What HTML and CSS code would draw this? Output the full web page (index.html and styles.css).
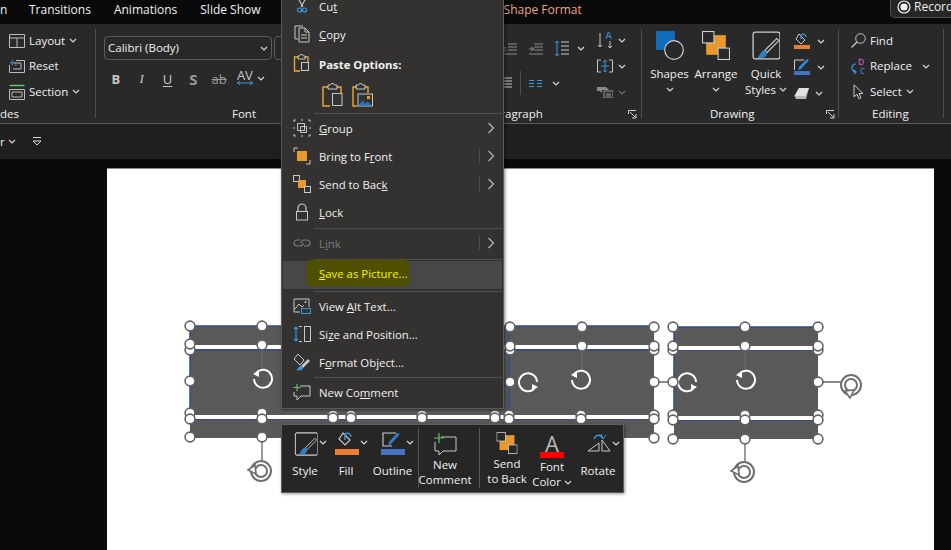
FILE: index.html
```html
<!DOCTYPE html>
<html lang="en">
  <head>
    <meta charset="UTF-8" />
    <title>Shape Format - Save as Picture</title>
    <link rel="stylesheet" href="styles.css">
  </head>
  <body>
    <svg class="defs" width="0" height="0">
      <symbol id="chev" viewBox="0 0 8 5"><path d="M1 1l3 3 3-3" fill="none" stroke="#d8d8d8" stroke-width="1.2"/></symbol>
      <symbol id="gt" viewBox="0 0 8 12"><path d="M1.5 1l5 5-5 5" fill="none" stroke="#b8b8b8" stroke-width="1.2"/></symbol>
      <symbol id="launch" viewBox="0 0 9 9"><path d="M.5 4V.5H8M2 2l5.5 5.5M8 4v4H4" fill="none" stroke="#d0d0d0"/></symbol>
      <symbol id="brush" viewBox="0 0 26 27"><rect x="1" y="1" width="25" height="25" rx="2" fill="none" stroke="#cfcfcf" stroke-width="1.2"/><path d="M25 9L14 20l-2-2L23 7z" fill="#292929" stroke="#cfcfcf"/><path d="M12 18c-4 0-4 4-7 7 4 1 9 0 9-5z" fill="#2f7fc9"/></symbol>
      <symbol id="bucket" viewBox="0 0 20 16"><path d="M7 1l7 7-5 5-6-6z" fill="none" stroke="#cfcfcf" stroke-width="1.1"/><path d="M9 8V2c3-2 6 0 6 3" fill="none" stroke="#3a96dd" stroke-width="1.5"/></symbol>
      <symbol id="pen" viewBox="0 0 20 16"><path d="M14 1H1v13h9" fill="none" stroke="#cfcfcf" stroke-width="1.1"/><path d="M18 2l-9 10-3 2 1-4 8-9z" fill="#2f7fc9"/></symbol>
      <symbol id="stack" viewBox="0 0 27 28"><rect x="4" y="4" width="19" height="19" fill="#e8982c"/><rect x=".5" y=".5" width="11" height="11" fill="#292929" stroke="#d0d0d0"/><rect x="15.5" y="16.5" width="11" height="11" fill="#292929" stroke="#d0d0d0"/></symbol>
      <symbol id="rotw" viewBox="0 0 24 24"><path d="M7 6a9 9 0 1 1-3 7" fill="none" stroke="#fff" stroke-width="2"/><path d="M3 8l6-4v7z" fill="#fff"/></symbol>
      <symbol id="rotr" viewBox="0 0 24 24"><path d="M17 18a9 9 0 1 1 3-7" fill="none" stroke="#fff" stroke-width="2"/><path d="M21 16l-6 4v-7z" fill="#fff"/></symbol>
      <symbol id="rotg" viewBox="0 0 28 28"><circle cx="15" cy="14" r="10" fill="#fff" stroke="#6e6e6e" stroke-width="2"/><circle cx="15" cy="14" r="6" fill="none" stroke="#6e6e6e" stroke-width="2"/><path d="M2 13l7-5 1 9z" fill="#fff" stroke="#6e6e6e" stroke-width="1.6"/></symbol>
      <symbol id="h" viewBox="0 0 12 12"><circle cx="6" cy="6" r="4.9" fill="#fff" stroke="#626262" stroke-width="1.6"/></symbol>
    </svg>

    <div class="tabs">
      <span class="tab-cut">n</span>
      <span class="tab">Transitions</span>
      <span class="tab">Animations</span>
      <span class="tab">Slide Show</span>
      <span class="tab tab-shape">Shape Format</span>
      <div class="record">
        <svg width="14" height="14" viewBox="0 0 14 14"><circle cx="7" cy="7" r="6" fill="none" stroke="#f2f2f2" stroke-width="1.2"/><circle cx="7" cy="7" r="3.6" fill="#f2f2f2"/></svg>
        <span>Record</span>
      </div>
    </div>

    <div class="ribbon">
      <div class="group g-slides">
        <div class="rows">
          <div class="row">
            <svg width="16" height="14" viewBox="0 0 16 14"><path d="M.5.5h15v13H.5zM.5 4h15M8 4v9.5" fill="none" stroke="#bdbdbd"/></svg>
            <span>Layout</span><svg class="chev" width="8" height="5"><use href="#chev"/></svg>
          </div>
          <div class="row">
            <svg width="16" height="14" viewBox="0 0 16 14"><path d="M7 1.5h8.500v12H.5V6M4 4h8v6H4" fill="none" stroke="#bdbdbd"/><path d="M2 4c3-1 5 0 5 3M4 1L1.500 4 4 6" fill="none" stroke="#3a96dd"/></svg>
            <span>Reset</span>
          </div>
          <div class="row">
            <svg width="16" height="16" viewBox="0 0 16 16"><path d="M.5 1.500h15" stroke="#5fc56a" stroke-width="1.500"/><path d="M.5 5.500h15v10H.5zM3 8h10v5H3z" fill="none" stroke="#bdbdbd"/></svg>
            <span>Section</span><svg class="chev" width="8" height="5"><use href="#chev"/></svg>
          </div>
        </div>
        <div class="glabel glabel-left">des</div>
      </div>

      <div class="group g-font">
        <div class="font-top">
          <div class="select"><span>Calibri (Body)</span><svg class="chev" width="8" height="5"><use href="#chev"/></svg></div>
          <div class="select select-size"></div>
        </div>
        <div class="font-bottom">
          <b class="fb">B</b>
          <i class="fi">I</i>
          <u class="fu">U</u>
          <b class="fs">S</b>
          <s class="fab">ab</s>
          <span class="fav">AV<svg width="16" height="4" viewBox="0 0 16 4"><path d="M0 2h16M3 .2L.5 2 3 3.800M13 .2L15.500 2 13 3.800" fill="none" stroke="#3a96dd"/></svg></span>
          <svg class="chev" width="8" height="5"><use href="#chev"/></svg>
        </div>
        <div class="glabel glabel-font">Font</div>
      </div>

      <div class="group g-para">
        <div class="para-body">
          <div class="para-left">
            <div class="para-row">
              <svg width="15" height="12" viewBox="0 0 15 12"><path d="M6 1h9M6 4h9M6 7h9M1 11h14M4 4L1 6l3 2" fill="none" stroke="#8a8a8a"/></svg>
              <svg width="15" height="12" viewBox="0 0 15 12"><path d="M6 1h9M6 4h9M6 7h9M1 11h14M1 6h4M3 4l3 2-3 2" fill="none" stroke="#8a8a8a"/></svg>
              <svg width="15" height="17" viewBox="0 0 15 17"><path d="M3 1v15M1 3l2-2 2 2M1 14l2 2 2-2" fill="none" stroke="#3a96dd"/><path d="M7 2h8M7 6h8M7 10h8M7 14h8" stroke="#c8c8c8"/></svg>
              <svg class="chev" width="8" height="5"><use href="#chev"/></svg>
            </div>
            <div class="para-row para-row2">
              <svg width="10" height="12" viewBox="0 0 10 12"><path d="M0 1h10M0 4h10M0 7h10M0 10h10" stroke="#c8c8c8"/></svg>
              <i class="vsep"></i>
              <svg width="13" height="7" viewBox="0 0 13 7"><path d="M0 .5h5M8 .5h5M0 3.500h5M8 3.500h5M0 6.500h5M8 6.500h5" stroke="#3a96dd"/></svg>
              <svg class="chev" width="8" height="5"><use href="#chev"/></svg>
            </div>
          </div>
          <div class="para-right">
            <div class="row-s">
              <svg width="16" height="17" viewBox="0 0 16 17"><path d="M3 1v14M1 13l2 2 2-2M13 9v7M11 14l2 2 2-2" fill="none" stroke="#c8c8c8"/><text x="8.500" y="7" class="ta">A</text></svg>
              <svg class="chev" width="8" height="5"><use href="#chev"/></svg>
            </div>
            <div class="row-s">
              <svg width="16" height="14" viewBox="0 0 16 14"><path d="M4 1H.5v12H4M12 1h3.500v12H12" fill="none" stroke="#c8c8c8"/><path d="M8 1v12M6 3l2-2 2 2M6 11l2 2 2-2M4 7h8" fill="none" stroke="#3a96dd"/></svg>
              <svg class="chev" width="8" height="5"><use href="#chev"/></svg>
            </div>
            <div class="row-s row-dim">
              <svg width="16" height="12" viewBox="0 0 16 12"><path d="M0 1h9l3 3H5v3L3 5H0z" fill="#8a8a8a"/><path d="M7 5h9v7H7zM9 8h5M9 10h5" fill="none" stroke="#9a9a9a"/></svg>
              <svg class="chev" width="8" height="5"><use href="#chev"/></svg>
            </div>
          </div>
        </div>
        <div class="glabel glabel-para"><span>Paragraph</span><svg width="9" height="9"><use href="#launch"/></svg></div>
      </div>

      <div class="group g-draw">
        <div class="draw-body">
          <div class="big big-shapes">
            <svg width="28" height="29" viewBox="0 0 28 29"><rect width="19" height="19" fill="#0f6cbd"/><circle cx="18" cy="19" r="9.300" fill="#292929" stroke="#cfcfcf" stroke-width="1.200"/></svg>
            <span>Shapes</span><svg class="chev" width="8" height="5"><use href="#chev"/></svg>
          </div>
          <div class="big big-arrange">
            <svg width="28" height="28"><use href="#stack"/></svg>
            <span>Arrange</span><svg class="chev" width="8" height="5"><use href="#chev"/></svg>
          </div>
          <div class="big big-quick">
            <svg width="30" height="29" viewBox="0 0 26 27"><use href="#brush"/></svg>
            <span>Quick</span><span>Styles <svg class="chev" width="8" height="5"><use href="#chev"/></svg></span>
          </div>
          <div class="draw-tools">
            <div class="row-s">
              <svg width="16" height="16" viewBox="0 0 16 16"><path d="M5 1l6 6-4 4-5-5z" fill="none" stroke="#cfcfcf"/><path d="M7 6V2c3-2 5 0 5 2" fill="none" stroke="#3a96dd" stroke-width="1.300"/><rect y="12" width="16" height="4" fill="#ed7d31"/></svg>
              <svg class="chev" width="8" height="5"><use href="#chev"/></svg>
            </div>
            <div class="row-s">
              <svg width="16" height="16" viewBox="0 0 16 16"><path d="M10 1H.5v10" fill="none" stroke="#cfcfcf"/><path d="M15 1l-8 9-3 1 1-3 8-8z" fill="#2f8be0"/><rect y="12" width="16" height="4" fill="#4472c4"/></svg>
              <svg class="chev" width="8" height="5"><use href="#chev"/></svg>
            </div>
            <div class="row-s">
              <svg width="16" height="13" viewBox="0 0 16 13"><path d="M5 1h10l-3 11H2L.5 9z" fill="#b8b8b8"/><path d="M5 1h10l-4 8H.5z" fill="#e0e0e0"/></svg>
              <svg class="chev chev-eraser" width="8" height="5"><use href="#chev"/></svg>
            </div>
          </div>
        </div>
        <div class="glabel glabel-draw"><span>Drawing</span><svg width="9" height="9"><use href="#launch"/></svg></div>
      </div>

      <div class="group g-edit">
        <div class="rows">
          <div class="row">
            <svg width="15" height="15" viewBox="0 0 15 15"><circle cx="9.500" cy="5.500" r="4.800" fill="none" stroke="#c8c8c8"/><path d="M6 9l-5.500 5.500" stroke="#c8c8c8" stroke-width="1.300"/></svg>
            <span>Find</span>
          </div>
          <div class="row">
            <svg width="15" height="17" viewBox="0 0 15 17"><text x="7" y="7" class="tb">b</text><text x="9" y="16" class="tc">c</text><path d="M5 6C2 6 1 8 1 10s2 4 4 4M3 12l2 2-2 2" fill="none" stroke="#3a96dd" stroke-width="1.200"/></svg>
            <span>Replace</span><svg class="chev chev-replace" width="8" height="5"><use href="#chev"/></svg>
          </div>
          <div class="row">
            <svg width="15" height="16" viewBox="0 0 15 16"><path d="M3 .8v12l3-2.500 2 4.500 2-1-2-4.300h4z" fill="none" stroke="#c8c8c8"/></svg>
            <span>Select</span><svg class="chev" width="8" height="5"><use href="#chev"/></svg>
          </div>
        </div>
        <div class="glabel glabel-edit">Editing</div>
      </div>
    </div>

    <div class="subbar">
      <span>r</span><svg class="chev" width="8" height="5"><use href="#chev"/></svg>
      <svg class="qat" width="10" height="9" viewBox="0 0 10 9"><path d="M1 .5h8M1 4l4 4 4-4z" fill="none" stroke="#d8d8d8"/></svg>
    </div>

    <div class="canvas">
      <div class="slide">
        <svg class="shapes" width="827" height="381" viewBox="107 169 827 381">
          <rect x="190" y="326" width="464" height="112" fill="#595959"/>
          <rect x="674" y="327" width="144" height="112" fill="#595959"/>
          <path d="M190 326h464M190 350h464M190 419h464M190 326v93M509 327v92" fill="none" stroke="#2f4a8f" stroke-width="1.500"/>
          <path d="M674 327h144M674 350h144M674 420h144M674 327v93" fill="none" stroke="#2f4a8f" stroke-width="1.500"/>
          <rect x="190" y="345" width="464" height="4" fill="#fff"/>
          <rect x="190" y="415" width="464" height="4" fill="#fff"/>
          <rect x="674" y="346" width="144" height="4" fill="#fff"/>
          <rect x="674" y="416" width="144" height="4" fill="#fff"/>
          <path d="M654 382h20M818 382h26M745 439v22M262 437v24" stroke="#666" stroke-width="1.300"/>
          <path d="M262 350v20M582 350v20M745 350v20" stroke="#6f6f6f"/>

          <use href="#rotw" x="250" y="366" width="24" height="24"/>
          <use href="#rotw" x="568" y="367" width="24" height="24"/>
          <use href="#rotw" x="733" y="367" width="24" height="24"/>
          <use href="#rotr" x="517" y="371" width="24" height="24"/>
          <use href="#rotr" x="676" y="371" width="24" height="24"/>
          <use href="#rotg" x="246" y="457" width="28" height="28"/>
          <use href="#rotg" x="729" y="458" width="28" height="28"/>
          <use href="#rotg" x="837" y="372" width="28" height="28" transform="rotate(-90 851 386)"/>

          <use href="#h" x="184" y="320" width="12" height="12"/>
          <use href="#h" x="256" y="320" width="12" height="12"/>
          <use href="#h" x="184" y="344" width="12" height="12"/>
          <use href="#h" x="184" y="338" width="12" height="12"/>
          <use href="#h" x="256" y="339" width="12" height="12"/>
          <use href="#h" x="184" y="375" width="12" height="12"/>
          <use href="#h" x="184" y="407" width="12" height="12"/>
          <use href="#h" x="184" y="413" width="12" height="12"/>
          <use href="#h" x="256" y="407" width="12" height="12"/>
          <use href="#h" x="256" y="413" width="12" height="12"/>
          <use href="#h" x="184" y="431" width="12" height="12"/>
          <use href="#h" x="256" y="431" width="12" height="12"/>

          <use href="#h" x="327" y="409" width="12" height="12"/>
          <use href="#h" x="327" y="412" width="12" height="12"/>
          <use href="#h" x="345" y="409" width="12" height="12"/>
          <use href="#h" x="345" y="412" width="12" height="12"/>
          <use href="#h" x="416" y="409" width="12" height="12"/>
          <use href="#h" x="416" y="412" width="12" height="12"/>
          <use href="#h" x="489" y="409" width="12" height="12"/>
          <use href="#h" x="489" y="412" width="12" height="12"/>

          <use href="#h" x="504" y="321" width="12" height="12"/>
          <use href="#h" x="576" y="321" width="12" height="12"/>
          <use href="#h" x="648" y="321" width="12" height="12"/>
          <use href="#h" x="504" y="344" width="12" height="12"/>
          <use href="#h" x="504" y="340" width="12" height="12"/>
          <use href="#h" x="576" y="340" width="12" height="12"/>
          <use href="#h" x="648" y="344" width="12" height="12"/>
          <use href="#h" x="648" y="340" width="12" height="12"/>
          <use href="#h" x="504" y="376" width="12" height="12"/>
          <use href="#h" x="648" y="376" width="12" height="12"/>
          <use href="#h" x="503" y="409" width="12" height="12"/>
          <use href="#h" x="503" y="413" width="12" height="12"/>
          <use href="#h" x="575" y="409" width="12" height="12"/>
          <use href="#h" x="575" y="413" width="12" height="12"/>
          <use href="#h" x="648" y="409" width="12" height="12"/>
          <use href="#h" x="648" y="413" width="12" height="12"/>
          <use href="#h" x="648" y="432" width="12" height="12"/>

          <use href="#h" x="667" y="321" width="12" height="12"/>
          <use href="#h" x="739" y="321" width="12" height="12"/>
          <use href="#h" x="812" y="321" width="12" height="12"/>
          <use href="#h" x="667" y="344" width="12" height="12"/>
          <use href="#h" x="667" y="340" width="12" height="12"/>
          <use href="#h" x="739" y="340" width="12" height="12"/>
          <use href="#h" x="812" y="344" width="12" height="12"/>
          <use href="#h" x="812" y="340" width="12" height="12"/>
          <use href="#h" x="667" y="376" width="12" height="12"/>
          <use href="#h" x="812" y="376" width="12" height="12"/>
          <use href="#h" x="667" y="409" width="12" height="12"/>
          <use href="#h" x="667" y="414" width="12" height="12"/>
          <use href="#h" x="739" y="409" width="12" height="12"/>
          <use href="#h" x="739" y="414" width="12" height="12"/>
          <use href="#h" x="812" y="409" width="12" height="12"/>
          <use href="#h" x="812" y="414" width="12" height="12"/>
          <use href="#h" x="667" y="433" width="12" height="12"/>
          <use href="#h" x="739" y="433" width="12" height="12"/>
          <use href="#h" x="812" y="433" width="12" height="12"/>
        </svg>
      </div>
    </div>

    <div class="menu">
      <div class="mi">
        <svg width="18" height="18" viewBox="0 0 18 18"><path d="M5 1l5 9M13 1L8 10" stroke="#c8c8c8" stroke-width="1.100"/><circle cx="6.500" cy="13" r="2" fill="none" stroke="#3a96dd" stroke-width="1.200"/><circle cx="11.500" cy="13" r="2" fill="none" stroke="#3a96dd" stroke-width="1.200"/></svg>
        <span>Cu<u>t</u></span>
      </div>
      <div class="mi">
        <svg width="18" height="18" viewBox="0 0 18 18"><path d="M10 1H2v13h3M6 3h6l4 4v10H6zM12 3v4h4M8 10h6M8 13h6" fill="none" stroke="#c8c8c8"/></svg>
        <span><u>C</u>opy</span>
      </div>
      <div class="mi mi-paste">
        <svg width="18" height="18" viewBox="0 0 18 18"><path d="M5 3H1.500v14H7" fill="none" stroke="#f0a830" stroke-width="1.300"/><path d="M12 3h3v5" fill="none" stroke="#f0a830" stroke-width="1.300"/><path d="M5 5V2h1.500l1-1.500h2l1 1.500H12v3z" fill="none" stroke="#c8c8c8"/><rect x="8.500" y="8.500" width="7" height="8" fill="#333" stroke="#c8c8c8"/></svg>
        <b>Paste Options:</b>
      </div>
      <div class="paste-row">
        <svg width="21" height="24" viewBox="0 0 21 24"><path d="M6 4H1v19h7" fill="none" stroke="#f0a830" stroke-width="1.400"/><path d="M15 4h4v6" fill="none" stroke="#f0a830" stroke-width="1.400"/><path d="M6 6V2h2.500l1-1.500h2l1 1.500H15v4z" fill="none" stroke="#c8c8c8"/><rect x="10.500" y="10.500" width="9.500" height="12" fill="#333" stroke="#c8c8c8"/></svg>
        <svg width="21" height="24" viewBox="0 0 21 24"><path d="M5 4H1v19h4" fill="none" stroke="#f0a830" stroke-width="1.400"/><path d="M13 4h3v6" fill="none" stroke="#f0a830" stroke-width="1.400"/><path d="M4 6V2h2.500l1-1.500h2l1 1.500H13v4z" fill="none" stroke="#c8c8c8"/><rect x="6" y="11" width="14.500" height="12" fill="#333" stroke="#c8c8c8"/><path d="M6.500 22.500l4-5 3 3 2-2 4.500 4z" fill="#1a75c9"/><rect x="15" y="13" width="3" height="3" fill="#e8982c"/></svg>
      </div>
      <div class="sep sep-tight"></div>
      <div class="mi">
        <svg width="18" height="18" viewBox="0 0 18 18"><path d="M1 3V1h2M8 1h2M15 1h2v2M1 8v2M1 15v2h2M8 17h2M15 17h2v-2M17 8v2" stroke="#c8c8c8" fill="none"/><path d="M4.500 4.500h7v7h-7zM7.500 7.500h6v6h-6z" fill="none" stroke="#c8c8c8"/></svg>
        <span><u>G</u>roup</span><svg class="gt" width="8" height="12"><use href="#gt"/></svg>
      </div>
      <div class="mi">
        <svg width="18" height="18" viewBox="0 0 18 18"><path d="M1 5V1h4M13 17h4v-4" fill="none" stroke="#c8c8c8"/><rect x="4" y="4" width="10" height="10" fill="#e8982c"/></svg>
        <span>Bring to F<u>r</u>ont</span><i class="bar"></i><svg class="gt gt-bar" width="8" height="12"><use href="#gt"/></svg>
      </div>
      <div class="mi">
        <svg width="18" height="18" viewBox="0 0 18 18"><rect x=".5" y=".5" width="6" height="6" fill="none" stroke="#c8c8c8"/><rect x="5" y="5" width="8" height="8" fill="#e8982c"/><rect x="11.500" y="11.500" width="6" height="6" fill="#333" stroke="#c8c8c8"/></svg>
        <span>Send to Bac<u>k</u></span><i class="bar"></i><svg class="gt gt-bar" width="8" height="12"><use href="#gt"/></svg>
      </div>
      <div class="mi">
        <svg width="18" height="18" viewBox="0 0 18 18"><path d="M5 8V5a4 4 0 0 1 8 0v3" fill="none" stroke="#c8c8c8" stroke-width="1.200"/><rect x="3.500" y="8.500" width="11" height="8.500" fill="none" stroke="#c8c8c8"/></svg>
        <span><u>L</u>ock</span>
      </div>
      <div class="sep"></div>
      <div class="mi mi-off">
        <svg width="18" height="18" viewBox="0 0 18 18"><path d="M7 6H4a3 3 0 0 0 0 6h3a3 3 0 0 0 3-3M11 12h3a3 3 0 0 0 0-6h-3a3 3 0 0 0-3 3" fill="none" stroke="#7a7a7a" stroke-width="1.200"/></svg>
        <span>L<u>i</u>nk</span><i class="bar"></i><svg class="gt gt-bar" width="8" height="12"><use href="#gt"/></svg>
      </div>
      <div class="sep"></div>
      <div class="mi mi-save">
        <i class="noicon"></i>
        <span class="hl"><u>S</u>ave as Picture...</span>
      </div>
      <div class="sep"></div>
      <div class="mi">
        <svg width="18" height="18" viewBox="0 0 18 18"><path d="M16 10V2H1v13h6" fill="none" stroke="#c8c8c8"/><path d="M2 12l4-5 3 3 2-2" fill="none" stroke="#c8c8c8"/><circle cx="12.500" cy="5" r="1" fill="#c8c8c8"/><rect x="8.500" y="11.500" width="9" height="5" fill="#333" stroke="#3a96dd"/></svg>
        <span>View <u>A</u>lt Text...</span>
      </div>
      <div class="mi">
        <svg width="18" height="18" viewBox="0 0 18 18"><path d="M3 2v14M1 4l2-2 2 2M1 14l2 2 2-2" fill="none" stroke="#3a96dd" stroke-width="1.200"/><rect x="11.500" y="1.500" width="6" height="15" fill="none" stroke="#c8c8c8"/><path d="M6 1.500h3M6 16.500h3" stroke="#c8c8c8"/></svg>
        <span>Si<u>z</u>e and Position...</span>
      </div>
      <div class="mi">
        <svg width="18" height="18" viewBox="0 0 18 18"><path d="M5 1l6 6-4 5-6-6z" fill="none" stroke="#c8c8c8"/><path d="M17 8l-7 7-2-2 7-7z" fill="#c8c8c8"/><path d="M8 13c-3 0-2 3-5 4 4 1 7 0 7-2z" fill="#3a96dd"/></svg>
        <span>F<u>o</u>rmat Object...</span>
      </div>
      <div class="sep sep-tight"></div>
      <div class="mi">
        <svg width="18" height="18" viewBox="0 0 18 18"><path d="M7 3h10v10H8l-4 4v-4H1V9" fill="none" stroke="#c8c8c8"/><path d="M4 1v7M.5 4.500h7" stroke="#5fc56a" stroke-width="1.200"/></svg>
        <span>New Co<u>m</u>ment</span>
      </div>
    </div>

    <div class="mini">
      <div class="mb mb-style">
        <div class="mb-ic"><svg width="24" height="24" viewBox="0 0 26 27"><use href="#brush"/></svg><svg class="chev" width="8" height="5"><use href="#chev"/></svg></div>
        <span>Style</span>
      </div>
      <div class="mb mb-fill">
        <div class="mb-ic"><span class="swatch"><svg width="22" height="16" viewBox="0 0 20 16"><use href="#bucket"/></svg><i class="sw-orange"></i></span><svg class="chev" width="8" height="5"><use href="#chev"/></svg></div>
        <span>Fill</span>
      </div>
      <div class="mb mb-outline">
        <div class="mb-ic"><span class="swatch"><svg width="22" height="16" viewBox="0 0 20 16"><use href="#pen"/></svg><i class="sw-blue"></i></span><svg class="chev" width="8" height="5"><use href="#chev"/></svg></div>
        <span>Outline</span>
      </div>
      <i class="mini-sep"></i>
      <div class="mb mb-comment">
        <svg width="24" height="22" viewBox="0 0 24 22"><path d="M8 4h15v14H10l-4 4v-4H2v-9" fill="none" stroke="#c8c8c8"/><path d="M6 0v10M1 5h10" stroke="#5fc56a" stroke-width="1.200"/></svg>
        <span>New</span><span>Comment</span>
      </div>
      <i class="mini-sep"></i>
      <div class="mb mb-back">
        <svg width="22" height="22" viewBox="0 0 27 28"><use href="#stack"/></svg>
        <span>Send</span><span>to Back</span>
      </div>
      <div class="mb mb-color">
        <span class="swatch"><span class="letter">A</span><i class="sw-red"></i></span>
        <span>Font</span><span class="nowrap">Color <svg class="chev" width="8" height="5"><use href="#chev"/></svg></span>
      </div>
      <div class="mb mb-rotate">
        <div class="mb-ic"><svg width="24" height="19" viewBox="0 0 24 19"><path d="M1 18l11-8v8zM15 7v11h8z" fill="none" stroke="#c8c8c8"/><path d="M16 6C14 1 9 1 7 6" fill="none" stroke="#3a96dd" stroke-width="1.300"/><path d="M14 1l2 5 3-4" fill="none" stroke="#3a96dd"/></svg><svg class="chev" width="8" height="5"><use href="#chev"/></svg></div>
        <span>Rotate</span>
      </div>
    </div>
  </body>
</html>
```

FILE: styles.css
```css
*{
    margin: 0;
    padding: 0;
    box-sizing: border-box;
}
body{
    width: 951px;
    height: 550px;
    overflow: hidden;
    position: relative;
    background: #0a0a0a;
    color: #f0f0f0;
    font-family: "Open Sans", sans-serif;
    font-size: 11.500px;
    line-height: 16px;
}
svg{
    flex-shrink: 0;
    display: block;
}
.defs{
    position: absolute;
}
i{
    display: block;
}
.chev{
    display: inline-block;
}
.nowrap{
    white-space: nowrap;
}

/* tab strip */
.tabs{
    height: 24px;
    display: flex;
    align-items: center;
    background: #0a0a0a;
    font-size: 12px;
    padding-bottom: 5px;
    overflow: hidden;
}
.tab-cut{
    width: 29px;
}
.tab{
    margin-right: 23px;
}
.tab-shape{
    margin-left: 220px;
    margin-right: 0;
    color: #e8a48c;
}
.record{
    margin-left: auto;
    margin-right: -20px;
    margin-top: -5px;
    width: 81px;
    height: 21px;
    flex-shrink: 0;
    display: flex;
    align-items: center;
    gap: 3px;
    padding-left: 6px;
    background: #262626;
    border: 1px solid #4f4f4f;
    border-top: 0;
    border-radius: 0 0 0 5px;
}

/* ribbon */
.ribbon{
    height: 100px;
    display: flex;
    padding-top: 5px;
    background: #292929;
    border-bottom: 1px solid #5a5a5a;
}
.group{
    height: 89px;
    position: relative;
    border-right: 1px solid #4f4f4f;
    flex-shrink: 0;
}
.g-slides{
    width: 96px;
}
.g-font{
    width: 364px;
}
.g-para{
    width: 182px;
}
.g-draw{
    width: 197px;
}
.g-edit{
    width: 105px;
}
.rows{
    display: flex;
    flex-direction: column;
    margin-top: -1px;
}
.row{
    height: 25.500px;
    display: flex;
    align-items: center;
    gap: 4px;
}
.g-slides .rows{
    padding-left: 9px;
}
.g-edit .rows{
    padding-left: 12px;
}
.chev-replace{
    margin-left: 6px;
}
.glabel{
    position: absolute;
    bottom: -4px;
    line-height: 16px;
    display: flex;
    align-items: center;
}
.glabel-left{
    left: 0;
}
.glabel-font{
    left: 136px;
}
.glabel-para{
    left: 0;
    right: 4px;
    justify-content: space-between;
    padding-left: 27px;
}
.glabel-draw{
    left: 0;
    right: 3px;
    justify-content: space-between;
    padding-left: 68px;
}
.glabel-edit{
    left: 33px;
}

.font-top{
    display: flex;
    gap: 2px;
    padding: 7px 0 0 8px;
}
.select{
    width: 168px;
    height: 24px;
    display: flex;
    align-items: center;
    justify-content: space-between;
    padding: 0 3px;
    border: 1px solid #5c5c5c;
    border-radius: 4px;
    background: #292929;
}
.select-size{
    width: 40px;
}
.font-bottom{
    display: flex;
    align-items: center;
    padding: 6px 0 0 7px;
    color: #c8c8c8;
    height: 31px;
    font-size: 13px;
}
.fb,
.fi,
.fu,
.fs,
.fab,
.fav{
    width: 25.800px;
    text-align: center;
}
.fi{
    font-family: "Liberation Serif", serif;
}
.fu{
    text-underline-offset: 2px;
}
.fs{
    font-size: 15px;
    color: #9a9a9a;
}
.fab{
    color: #9a9a9a;
}
.fav{
    display: block;
    line-height: 12px;
    margin-top: -3px;
    color: #c8c8c8;
}
.fav svg{
    margin: 0 auto;
}
.font-bottom .chev{
    margin-left: -1px;
}

.para-body{
    display: flex;
    justify-content: flex-end;
    margin-top: -2px;
    padding-right: 12px;
    gap: 12px;
}
.para-left{
    display: flex;
    flex-direction: column;
    align-items: flex-start;
    padding-top: 13px;
    gap: 14px;
}
.para-row{
    display: flex;
    align-items: center;
    gap: 11px;
}
.para-row .chev{
    margin-left: -3px;
}
.para-row2{
    gap: 8px;
    height: 24px;
}
.para-row2 .chev{
    margin-left: 2px;
}
.vsep{
    width: 1px;
    height: 24px;
    background: #4f4f4f;
}
.para-right{
    display: flex;
    flex-direction: column;
    width: 32px;
}
.row-s{
    height: 26px;
    display: flex;
    align-items: center;
    gap: 5px;
}
.row-dim .chev{
    opacity: 0.4;
}
.chev-eraser{
    margin-left: -2px;
}
.ta{
    font: 10px "Open Sans", sans-serif;
    fill: #3a96dd;
}
.tb{
    font: 10px "Open Sans", sans-serif;
    fill: #d060d0;
}
.tc{
    font: 10px "Open Sans", sans-serif;
    fill: #3a96dd;
}

.draw-body{
    display: flex;
    padding-top: 2px;
}
.big{
    display: flex;
    flex-direction: column;
    align-items: center;
    line-height: 16px;
}
.big > svg:first-child{
    height: 29px;
    margin-bottom: 6px;
}
.big > .chev{
    margin-top: 5px;
}
.big span .chev{
    vertical-align: 2px;
}
.big-shapes{
    width: 47px;
    margin-left: 3px;
    padding-left: 2px;
}
.big-arrange{
    width: 46px;
    margin-left: 1px;
}
.big-quick{
    width: 50px;
    margin-left: 2px;
}
.draw-tools{
    display: flex;
    flex-direction: column;
    margin-left: 3px;
    margin-top: -3px;
}
.draw-tools .row-s{
    gap: 7px;
}

/* bar under the ribbon */
.subbar{
    height: 35px;
    display: flex;
    align-items: center;
    gap: 3px;
    background: #1f1f1f;
}
.qat{
    margin-left: 13px;
}

/* slide area */
.canvas{
    height: 391px;
    padding: 9px 0 0 107px;
}
.slide{
    width: 827px;
    height: 400px;
    position: relative;
    background: #fff;
    border-top: 1px solid #8a8a8a;
}
.shapes{
    position: absolute;
    top: 0;
    left: 0;
}

/* context menu, open over the ribbon */
.menu{
    position: absolute;
    left: 281px;
    top: -8px;
    width: 223px;
    height: 417px;
    background: #333231;
    border: 1px solid #595959;
    border-top: 0;
    box-shadow: 1px 1px 3px rgba(0, 0, 0, 0.5);
    font-size: 11.400px;
}
.mi{
    height: 28px;
    display: flex;
    align-items: center;
    padding-left: 11px;
    position: relative;
}
.mi > span,
.mi > b{
    padding-top: 1px;
}
.mi > svg:first-child,
.noicon{
    width: 18px;
    margin-right: 8px;
}
.mi-paste{
    height: 30px;
}
.mi-paste b{
    padding-top: 4px;
}
.paste-row{
    height: 34px;
    display: flex;
    align-items: center;
    gap: 9px;
    padding-left: 40px;
}
.sep{
    height: 1px;
    margin: 2px 1px 0 32px;
    background: #4f4f4f;
}
.sep-tight{
    margin-top: 1px;
}
.gt{
    position: absolute;
    right: 8px;
}
.bar{
    position: absolute;
    right: 23px;
    top: 7px;
    width: 1px;
    height: 14px;
    background: #4f4f4f;
}
.mi-off{
    color: #7a7a7a;
}
.mi-save{
    margin: 1px 1px 0;
    padding-left: 10px;
    background: #474747;
}
.mi-save .hl{
    color: #f4f400;
    background: #4f4f00;
    padding: 6px 1px 4px 12px;
    margin: 0 0 4px -12px;
    border-radius: 5px;
    box-shadow: 0 0 2px #4f4f00;
}

/* floating format toolbar */
.mini{
    position: absolute;
    left: 281px;
    top: 424px;
    width: 343px;
    height: 69px;
    display: flex;
    background: #262626;
    border: 1px solid #5e5e5e;
    box-shadow: 1px 1px 3px rgba(0, 0, 0, 0.4);
}
.mb{
    display: flex;
    flex-direction: column;
    align-items: center;
    line-height: 15px;
    padding-top: 7px;
    font-size: 11.500px;
}
.mb-ic{
    display: flex;
    align-items: flex-start;
    height: 30px;
    margin-bottom: 1px;
    gap: 1px;
    margin-left: 10px;
}
.mb-ic .chev{
    margin-top: 8px;
}
.mb-style{
    width: 40px;
    margin-left: 3px;
}
.mb-fill{
    width: 42px;
}
.mb-outline{
    width: 51px;
}
.swatch{
    display: block;
    width: 24px;
}
.sw-orange,
.sw-blue,
.sw-red{
    height: 6px;
    width: 24px;
    margin-top: 1px;
}
.sw-orange{
    background: #ed7d31;
}
.sw-blue{
    background: #4472c4;
}
.sw-red{
    background: #ff0000;
    margin-top: -2px;
}
.mini-sep{
    width: 1px;
    height: 60px;
    margin: 3px 0 0;
    background: #555;
}
.mb-comment{
    width: 60px;
    padding: 8px 8px 0 0;
}
.mb-comment svg{
    margin-bottom: 2px;
}
.mb-back{
    width: 54px;
}
.mb-back svg{
    margin-bottom: 2px;
}
.mb-color{
    width: 36px;
}
.letter{
    display: block;
    text-align: center;
    font-size: 22px;
    line-height: 22px;
    color: #b8b8b8;
}
.mb-color .swatch{
    margin-bottom: 1px;
}
.mb-color .chev{
    vertical-align: 1px;
}
.mb-rotate{
    width: 53px;
    padding-left: 3px;
}
.mb-rotate .mb-ic{
    padding-top: 1px;
}
```
